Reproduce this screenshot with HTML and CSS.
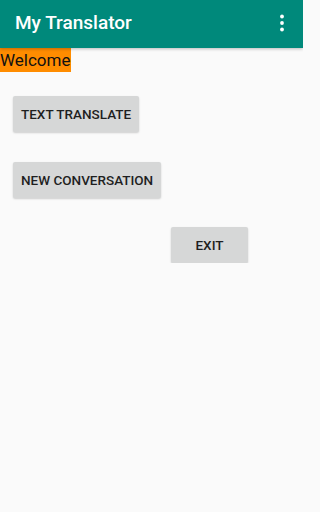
FILE: index.html
```html
<!DOCTYPE html>
<html>
<head>
<meta charset="utf-8">
<link rel="stylesheet" href="styles.css">
</head>
<body>
<header class="toolbar">
  <div class="title">My Translator</div>
  <div class="menu" aria-label="More options">
    <svg width="6" height="20" viewBox="0 0 6 20"><circle cx="3" cy="3.5" r="1.9" fill="#fff"/><circle cx="3" cy="10" r="1.9" fill="#fff"/><circle cx="3" cy="16.5" r="1.9" fill="#fff"/></svg>
  </div>
</header>
<main class="content">
  <div class="welcome">Welcome</div>
  <div class="buttons">
    <button class="btn btn-translate">TEXT TRANSLATE</button>
    <button class="btn btn-conv">NEW CONVERSATION</button>
    <button class="btn btn-exit">EXIT</button>
  </div>
</main>
</body>
</html>
```
FILE: styles.css
```css
html, body {
  margin: 0;
  padding: 0;
  background: #fafafa;
  font-family: Roboto, "Liberation Sans", sans-serif;
}
body {
  max-width: 303px;
}
.toolbar {
  height: 48px;
  background: #00897b;
  display: flex;
  align-items: center;
  justify-content: space-between;
  padding: 0 18px 0 15px;
  box-shadow: 0 1px 3px rgba(0,0,0,0.25);
  position: relative;
  z-index: 1;
}
.title {
  color: #fff;
  font-size: 19px;
  font-weight: 500;
  margin-top: -3px;
}
.menu {
  display: flex;
  align-items: center;
  margin-top: -3px;
}
.content {
  display: flex;
  flex-direction: column;
  align-items: flex-start;
}
.welcome {
  background: #ff8c00;
  color: #111;
  font-size: 17px;
  line-height: 24px;
  height: 24px;
}
.buttons {
  display: flex;
  flex-direction: column;
  align-items: flex-start;
  padding-left: 13px;
  margin-top: 24px;
  width: 100%;
  box-sizing: border-box;
}
.btn {
  font-family: Roboto, "Liberation Sans", sans-serif;
  font-weight: 500;
  font-size: 13.5px;
  color: #1f1f1f;
  background: #d6d7d7;
  border: none;
  border-radius: 2px;
  height: 36px;
  padding: 0 8px;
  box-shadow: 0 1px 2px rgba(0,0,0,0.18);
}
.btn-conv {
  margin-top: 30px;
}
.btn-exit {
  margin-top: 29px;
  margin-left: 158px;
  min-width: 77px;
}
```
